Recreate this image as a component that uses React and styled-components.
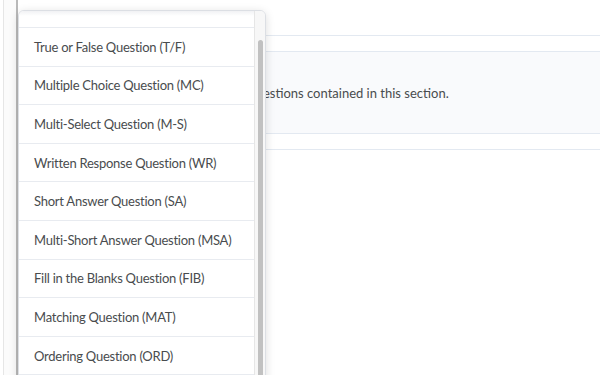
import React from "react";
import styled, { createGlobalStyle } from "styled-components";

const GlobalStyle = createGlobalStyle`
  html, body {
    margin: 0;
    padding: 0;
    background: #ffffff;
  }
  body {
    font-family: Lato, "Open Sans", sans-serif;
    color: #494c4e;
  }
`;

const Page = styled.div`
  position: relative;
  display: flex;
  width: 600px;
  height: 375px;
  overflow: hidden;
  background: #ffffff;
`;

const Rail = styled.div`
  width: 12px;
  margin-left: 3px;
  border-left: 1px solid #e6e6e6;
  border-right: 2px solid #b9b9b9;
  background: #fbfbfb;
`;

const Content = styled.div`
  flex: 1;
  display: flex;
  flex-direction: column;
  padding-top: 35px;
`;

const Rule = styled.div`
  height: 1px;
  background: #e3e9f1;
  margin-bottom: ${(p) => p.gap || 0}px;
`;

const Notice = styled.div`
  height: 81px;
  display: flex;
  align-items: center;
  padding-left: 155px;
  background: #f9fafc;
  border-top: 1px solid #e3e9f1;
  border-bottom: 1px solid #e3e9f1;
  margin-bottom: 15px;
  font-size: 13px;
  color: #494c4e;
  white-space: nowrap;
`;

const Menu = styled.div`
  position: absolute;
  left: 18px;
  top: 10px;
  width: 248px;
  height: 380px;
  display: flex;
  box-sizing: border-box;
  background: #ffffff;
  border: 1px solid #dcdfe4;
  border-radius: 6px;
  box-shadow: 0 2px 10px rgba(0, 0, 0, 0.14);
  overflow: hidden;
`;

const List = styled.ul`
  flex: 1;
  margin: 0;
  padding: 0;
  list-style: none;
  display: flex;
  flex-direction: column;
`;

const TopStub = styled.li`
  height: 17px;
  flex: none;
  box-sizing: border-box;
  border-bottom: 1px solid #e8ebf0;
  background: linear-gradient(#f1f2f4, #ffffff 5px);
`;

const Item = styled.li`
  height: 38.6px;
  flex: none;
  box-sizing: border-box;
  display: flex;
  align-items: center;
  padding-left: 15px;
  border-bottom: 1px solid #e8ebf0;
  font-size: 13px;
  letter-spacing: -0.25px;
  color: #494c4e;
  white-space: nowrap;
`;

const Track = styled.div`
  width: 11px;
  flex: none;
  display: flex;
  justify-content: center;
  background: #f7f7f7;
  border-left: 1px solid #e6e6e6;
  box-sizing: border-box;
`;

const Thumb = styled.div`
  width: 5px;
  margin-top: 29px;
  height: 400px;
  background: #c1c1c1;
  border-radius: 3px;
`;

const items = [
  "True or False Question (T/F)",
  "Multiple Choice Question (MC)",
  "Multi-Select Question (M-S)",
  "Written Response Question (WR)",
  "Short Answer Question (SA)",
  "Multi-Short Answer Question (MSA)",
  "Fill in the Blanks Question (FIB)",
  "Matching Question (MAT)",
  "Ordering Question (ORD)",
];

const App = () => {
  return (
    <Page>
      <GlobalStyle />
      <Rail />
      <Content>
        <Rule gap={15} />
        <Notice>There are no questions contained in this section.</Notice>
        <Rule />
      </Content>
      <Menu>
        <List>
          <TopStub />
          {items.map((label) => (
            <Item key={label}>{label}</Item>
          ))}
        </List>
        <Track>
          <Thumb />
        </Track>
      </Menu>
    </Page>
  );
};

export default App;
